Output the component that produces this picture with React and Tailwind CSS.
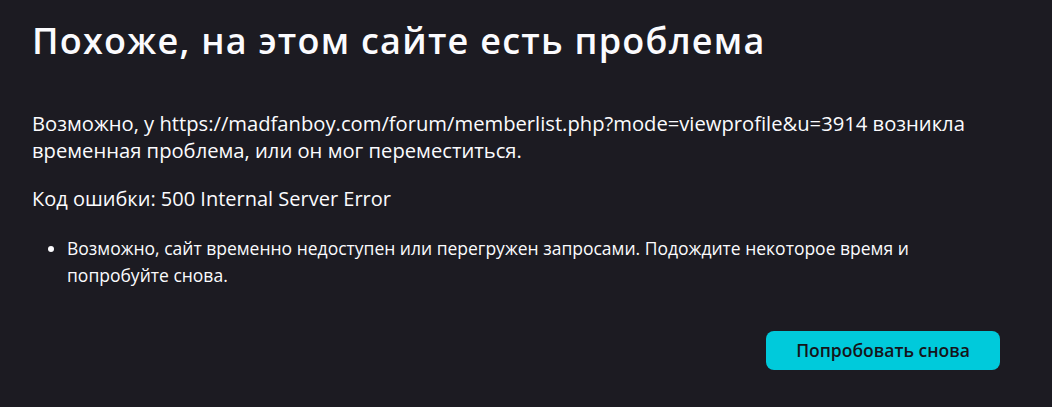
import React from 'react';

export default function App() {
  return (
    <div className="min-h-[407px] bg-[#1c1b22] text-[#fbfbfe] font-['Open_Sans',sans-serif] px-8 pt-[16px]">
      <div className="w-[968px]">
        <h1 className="text-[36px] font-semibold leading-[50px] tracking-[1.25px]">
          Похоже, на этом сайте есть проблема
        </h1>

        <p className="mt-[44px] text-[20.2px] leading-[27px]">
          Возможно, у https://madfanboy.com/forum/memberlist.php?mode=viewprofile&amp;u=3914 возникла
          временная проблема, или он мог переместиться.
        </p>

        <p className="mt-[21px] text-[20px] leading-[27px]">Код ошибки: 500 Internal Server Error</p>

        <ul className="mt-[23px] list-disc pl-[35px] text-[17.5px] leading-[27px] w-[900px]">
          <li>
            Возможно, сайт временно недоступен или перегружен запросами. Подождите некоторое время и
            попробуйте снова.
          </li>
        </ul>

        <div className="flex justify-end mt-[42px]">
          <button className="h-[39px] w-[234px] rounded-lg bg-[#00cadb] text-[#15141a] text-[17.5px] font-semibold">
            Попробовать снова
          </button>
        </div>
      </div>
    </div>
  );
}
